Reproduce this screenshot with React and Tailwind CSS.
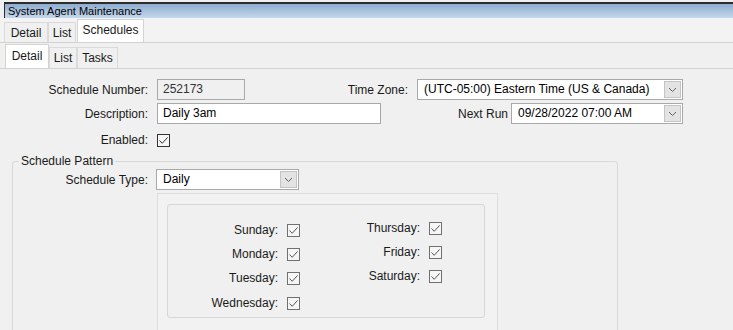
import React from 'react';

const font = { fontFamily: '"Liberation Sans", Arial, sans-serif' };

function Check({ dark }) {
  return (
    <span
      className={`flex h-[13px] w-[13px] items-center justify-center border bg-[#f6f6f6] ${
        dark ? 'border-[#333333]' : 'border-[#707070]'
      }`}
    >
      <svg width="11" height="11" viewBox="0 0 11 11" fill="none">
        <polyline
          points="1.5,5.5 4.2,8.3 9.6,2.4"
          stroke={dark ? '#333333' : '#555555'}
          strokeWidth="1"
        />
      </svg>
    </span>
  );
}

function DropBtn() {
  return (
    <span className="my-[1px] mr-[1px] flex w-[17px] items-center justify-center border border-[#c4c4c4] bg-[#e3e3e3]">
      <svg width="9" height="6" viewBox="0 0 9 6" fill="none">
        <polyline points="1,1 4.5,4.5 8,1" stroke="#606060" strokeWidth="1" />
      </svg>
    </span>
  );
}

function Select({ value, className }) {
  return (
    <div className={`flex h-[21px] border border-[#a9a9a9] bg-white ${className}`}>
      <span className="flex-1 pl-[6px] text-[12px] leading-[19px] text-black">{value}</span>
      <DropBtn />
    </div>
  );
}

function Tab({ label, w, h }) {
  return (
    <div
      className={`flex justify-center border border-b-0 border-[#dadada] bg-[#f0f0f0] text-[12px] leading-[20px] ${w} ${h}`}
    >
      {label}
    </div>
  );
}

function Day({ label, labelW, h = 'h-[24px]' }) {
  return (
    <div className={`flex items-center ${h}`}>
      <span className={`text-right text-[12px] ${labelW}`}>{label}</span>
      <span className="ml-[9px]">
        <Check />
      </span>
    </div>
  );
}

export default function App() {
  return (
    <div className="h-[330px] w-[733px] overflow-hidden bg-[#f0f0f0] text-[#1a1a1a]" style={font}>
      {/* window caption */}
      <div className="ml-[4px] mt-[2px] h-[16px] border-l border-t-2 border-[#2c2c2c] bg-linear-to-b from-[#8fadd0] to-[#c5d8ec] pl-[3px] text-[11px] leading-[14px] text-black">
        System Agent Maintenance
      </div>

      {/* outer tabs */}
      <div className="flex h-[25px] items-end border-b border-[#d2d2d2] bg-[#f3f3f3] pl-[4px]">
        <Tab label="Detail" w="w-[44px]" h="h-[20px]" />
        <Tab label="List" w="w-[28px]" h="h-[20px]" />
        <div className="ml-[1px] flex h-[23px] w-[67px] justify-center border border-b-0 border-[#d4d4d4] bg-white pt-[1px] text-[12px] leading-[18px]">
          Schedules
        </div>
      </div>

      {/* inner tabs */}
      <div className="flex h-[26px] items-end border-b border-[#d2d2d2] pl-[5px]">
        <div className="flex h-[24px] w-[44px] justify-center border border-b-0 border-[#d4d4d4] bg-white pt-[1px] text-[12px] leading-[20px]">
          Detail
        </div>
        <Tab label="List" w="w-[28px]" h="h-[21px]" />
        <Tab label="Tasks" w="w-[41px]" h="h-[21px]" />
      </div>

      {/* form */}
      <div className="mt-[10px] flex flex-col">
        <div className="flex h-[21px] items-center">
          <span className="w-[148px] text-right text-[12px]">Schedule Number:</span>
          <div className="ml-[9px] h-[21px] w-[88px] border border-[#a9a9a9] bg-[#f0f0f0] pl-[5px] text-[12px] leading-[19px] text-[#333]">
            252173
          </div>
          <span className="w-[163px] text-right text-[12px]">Time Zone:</span>
          <Select
            value="(UTC-05:00) Eastern Time (US & Canada)"
            className="ml-[9px] w-[266px]"
          />
        </div>
        <div className="mt-[3px] flex h-[21px] items-center">
          <span className="w-[148px] text-right text-[12px]">Description:</span>
          <div className="ml-[9px] h-[21px] w-[224px] border border-[#a9a9a9] bg-white pl-[5px] text-[12px] leading-[19px] text-black">
            Daily 3am
          </div>
          <span className="w-[127px] text-right text-[12px]">Next Run</span>
          <Select value="09/28/2022 07:00 AM" className="ml-[3px] w-[172px]" />
        </div>
        <div className="mt-[9px] flex h-[14px] items-center">
          <span className="w-[148px] text-right text-[12px]">Enabled:</span>
          <span className="ml-[9px]">
            <Check dark />
          </span>
        </div>
      </div>

      {/* schedule pattern group */}
      <fieldset className="ml-[12px] mt-[7px] h-[200px] w-[606px] rounded-[3px] border border-[#d8d8d8] px-0 pb-0 pt-0">
        <legend className="ml-[6px] px-[2px] text-[12px] leading-[14px]">Schedule Pattern</legend>
        <div className="mt-[1px] flex h-[21px] items-center">
          <span className="w-[135px] text-right text-[12px]">Schedule Type:</span>
          <Select value="Daily" className="ml-[8px] w-[143px]" />
        </div>
        <div className="ml-[144px] mt-[3px] h-[160px] w-[341px] border border-[#dddddd] bg-[#f2f2f2] pl-[9px] pt-[10px]">
          <div className="flex h-[114px] w-[318px] rounded-[3px] border border-[#d6d6d6] bg-[#f0f0f0] pt-[13px]">
            <div className="flex flex-col">
              <Day label="Sunday:" labelW="w-[110px]" />
              <Day label="Monday:" labelW="w-[110px]" />
              <Day label="Tuesday:" labelW="w-[110px]" />
              <Day label="Wednesday:" labelW="w-[110px]" h="h-[26px]" />
            </div>
            <div className="-mt-[2px] flex flex-col">
              <Day label="Thursday:" labelW="w-[120px]" />
              <Day label="Friday:" labelW="w-[120px]" />
              <Day label="Saturday:" labelW="w-[120px]" />
            </div>
          </div>
        </div>
      </fieldset>
    </div>
  );
}
